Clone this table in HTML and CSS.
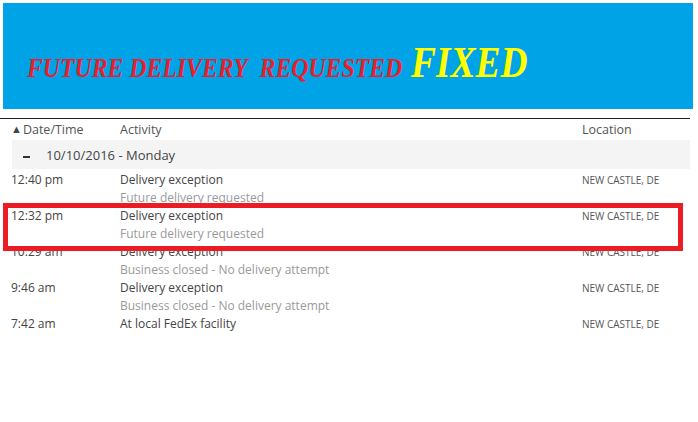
FILE: index.html
```html
<!DOCTYPE html>
<html>
<head>
<meta charset="utf-8">
<link rel="stylesheet" href="styles.css">
</head>
<body>
<div class="page">
  <div class="banner">
    <span class="banner-red-box"><span class="banner-red">FUTURE DELIVERY&nbsp; REQUESTED</span></span>
    <span class="banner-yellow">FIXED</span>
  </div>
  <div class="rule"></div>
  <div class="table">
    <div class="head">
      <div class="c-time"><span class="tri">&#9650;</span>Date/Time</div>
      <div class="c-act">Activity</div>
      <div class="c-loc">Location</div>
    </div>
    <div class="group"><span class="dash"></span>10/10/2016 - Monday</div>
    <div class="row">
      <div class="c-time">12:40 pm</div>
      <div class="c-act">Delivery exception<div class="sub">Future delivery requested</div></div>
      <div class="c-loc loc">NEW CASTLE, DE</div>
    </div>
    <div class="row">
      <div class="c-time">12:32 pm</div>
      <div class="c-act">Delivery exception<div class="sub">Future delivery requested</div></div>
      <div class="c-loc loc">NEW CASTLE, DE</div>
    </div>
    <div class="row">
      <div class="c-time">10:29 am</div>
      <div class="c-act">Delivery exception<div class="sub">Business closed - No delivery attempt</div></div>
      <div class="c-loc loc">NEW CASTLE, DE</div>
    </div>
    <div class="row">
      <div class="c-time">9:46 am</div>
      <div class="c-act">Delivery exception<div class="sub">Business closed - No delivery attempt</div></div>
      <div class="c-loc loc">NEW CASTLE, DE</div>
    </div>
    <div class="row">
      <div class="c-time">7:42 am</div>
      <div class="c-act">At local FedEx facility</div>
      <div class="c-loc loc">NEW CASTLE, DE</div>
    </div>
  </div>
  <div class="highlight"></div>
</div>
</body>
</html>
```

FILE: styles.css
```css
* { box-sizing: border-box; }
html, body { margin: 0; padding: 0; background: #fff; }
.page {
  position: relative;
  width: 698px;
  height: 422px;
  font-family: "Open Sans", "Noto Sans", sans-serif;
  font-size: 12px;
  color: #444;
}
.banner {
  margin: 3px 5px 0 3px;
  height: 106px;
  background: #00a3e6;
  display: flex;
  align-items: baseline;
  padding: 34px 0 0 24px;
  font-family: "Liberation Serif", serif;
  font-style: italic;
  font-weight: bold;
}
.banner-red-box {
  display: inline-block;
  width: 384px;
  flex: none;
}
.banner-red {
  color: #e8202e;
  font-size: 27px;
  display: inline-block;
  transform: scaleX(0.88);
  transform-origin: left bottom;
  white-space: nowrap;
}
.banner-yellow {
  color: #ffff00;
  font-size: 44px;
  display: inline-block;
  transform: scaleX(0.85);
  transform-origin: left bottom;
  white-space: nowrap;
}
.rule {
  margin-top: 9px;
  width: 690px;
  height: 1px;
  background: #222;
}
.table { width: 690px; }
.head {
  display: flex;
  height: 21px;
  line-height: 22px;
  color: #555;
  font-size: 12.5px;
}
.c-time { width: 120px; padding-left: 11px; flex: none; }
.c-act { width: 462px; flex: none; }
.c-loc { flex: 1; }
.tri { font-size: 11px; color: #444; margin-right: 1px; position: relative; top: -1px; }
.head .c-time { padding-left: 11px; }
.group {
  margin-left: 12px;
  height: 29px;
  background: #f4f4f4;
  display: flex;
  align-items: center;
  font-size: 13px;
  color: #444;
  padding-left: 11px;
  padding-top: 1px;
  margin-bottom: 2px;
}
.dash {
  display: inline-block;
  width: 7px;
  height: 2px;
  background: #333;
  margin: 4px 16px 0 0;
}
.row {
  display: flex;
  line-height: 18px;
  min-height: 36px;
  color: #444;
}
.row:last-child { min-height: 18px; }
.sub { color: #9a9a9a; }
.loc { font-size: 10px; color: #555; }
.highlight {
  position: absolute;
  left: 3px;
  top: 200px;
  width: 680px;
  height: 48px;
  border: 5px solid #ec1c24;
}
```
